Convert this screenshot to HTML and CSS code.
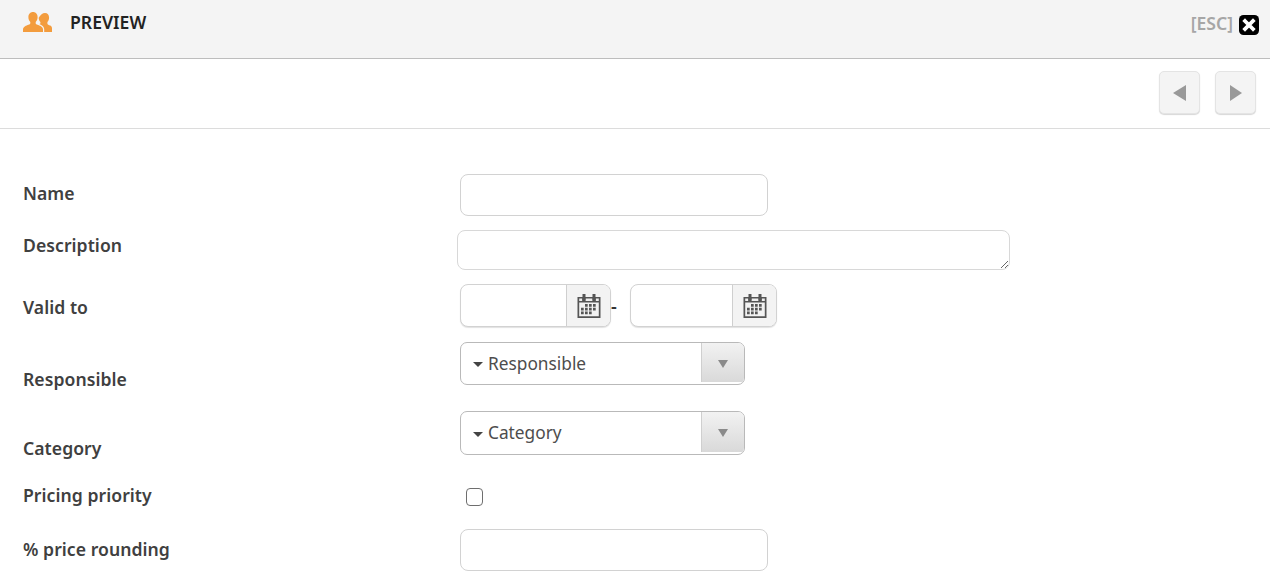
FILE: index.html
```html
<!DOCTYPE html>
<html lang="en">
<head>
<meta charset="utf-8">
<title>Preview</title>
<link rel="stylesheet" href="styles.css">
</head>
<body>
<header class="head">
  <div class="head-left">
    <svg class="users" width="30" height="21" viewBox="0 0 30 21"><path fill="#f39c3d" d="M10 1c2.800 0 4.600 2.200 4.600 5.200 0 2-.8 3.700-1.900 4.700v1.500c0 .9 3.200 1.600 5.200 2.800 1.400.8 2.100 1.800 2.100 3.300V21H0v-2.500c0-1.500.7-2.500 2.100-3.300 2-1.200 5.200-1.900 5.200-2.800v-1.500C6.200 9.900 5.400 8.200 5.400 6.200 5.400 3.200 7.200 1 10 1z"/><path fill="#f39c3d" d="M22 2c2.500 0 4.100 2 4.100 4.700 0 1.900-.8 3.500-1.700 4.400v1.600c0 .8 1.500 1.200 2.800 1.900 1.300.7 1.800 1.700 1.800 3V21h-7.800v-2.500c0-2-1-3.400-2.600-4.300-.9-.5-1.700-.9-2.300-1.200.6-.2.900-.4 1.100-.6v-1.300c-.9-.9-1.700-2.500-1.700-4.400C17.700 4 19.400 2 22 2z"/></svg>
    <span class="title">PREVIEW</span>
  </div>
  <div class="head-right">
    <span class="esc">[ESC]</span>
    <svg class="close" width="20" height="20" viewBox="0 0 20 20"><rect width="20" height="20" rx="4.500" fill="#000"/><path d="M6 6l8 8M14 6l-8 8" stroke="#fff" stroke-width="3.800" stroke-linecap="square" fill="none"/></svg>
  </div>
</header>
<nav class="toolbar">
  <button class="nav-btn" type="button"><span class="tri tri-left"></span></button>
  <button class="nav-btn" type="button"><span class="tri tri-right"></span></button>
</nav>
<form class="form">
  <div class="row row-name">
    <label class="lab">Name</label>
    <input class="inp" type="text">
  </div>
  <div class="row row-desc">
    <label class="lab">Description</label>
    <textarea class="area"></textarea>
  </div>
  <div class="row row-date">
    <label class="lab">Valid to</label>
    <div class="dates">
      <div class="date date-a">
        <span class="date-in"></span>
        <span class="cal"><svg width="24" height="25" viewBox="0 0 24 25"><use href="#calendar"/></svg></span>
      </div>
      <span class="dash">-</span>
      <div class="date date-b">
        <span class="date-in"></span>
        <span class="cal"><svg width="24" height="25" viewBox="0 0 24 25"><use href="#calendar"/></svg></span>
      </div>
    </div>
  </div>
  <div class="row row-sel row-resp">
    <label class="lab">Responsible</label>
    <div class="sel">
      <span class="sel-text"><span class="caret"></span>Responsible</span>
      <span class="sel-btn"><span class="caret-btn"></span></span>
    </div>
  </div>
  <div class="row row-sel row-cat">
    <label class="lab">Category</label>
    <div class="sel">
      <span class="sel-text"><span class="caret"></span>Category</span>
      <span class="sel-btn"><span class="caret-btn"></span></span>
    </div>
  </div>
  <div class="row row-check">
    <label class="lab">Pricing priority</label>
    <span class="check"></span>
  </div>
  <div class="row row-round">
    <label class="lab">% price rounding</label>
    <input class="inp" type="text">
  </div>
</form>
<svg class="defs" width="0" height="0">
  <symbol id="calendar" viewBox="0 0 24 25">
    <path fill="#555" d="M.5 4h23v21H.5z"/>
    <path fill="#f2f2f2" d="M2.200 9.500h19.600v13.800H2.200z"/>
    <path fill="#eee" d="M2.200 5.500h3v2.500h-3zM8.500 5.500h7v2.500h-7zM18.800 5.500h3v2.500h-3z"/>
    <path fill="#555" d="M5.500 1h3v6.500h-3zM15.500 1h3v6.500h-3z"/>
    <path fill="#555" d="M8 11h2.700v2.700H8zM12 11h2.700v2.700H12zM16 11h2.700v2.700H16zM4 14.700h2.700v2.700H4zM8 14.700h2.700v2.700H8zM12 14.700h2.700v2.700H12zM16 14.700h2.700v2.700H16zM4 18.500h2.700v2.700H4zM8 18.500h2.700v2.700H8zM12 18.500h2.700v2.700H12z"/>
  </symbol>
</svg>
</body>
</html>
```
FILE: styles.css
```css
* { box-sizing: border-box; }
html, body { margin: 0; padding: 0; }
body {
  font-family: "Noto Sans", "Open Sans", sans-serif;
  background: #fff;
  color: #333;
  height: 577px;
  overflow: hidden;
}
.head {
  height: 59px;
  background: #f4f4f4;
  border-bottom: 1px solid #bdbdbd;
  display: flex;
  justify-content: space-between;
  padding: 0 11px 0 23px;
}
.head-left { display: flex; align-items: flex-start; padding-top: 11px; }
.users { display: block; }
.title {
  margin-left: 17px;
  margin-top: -1px;
  font-size: 17.600px;
  font-weight: 600;
  line-height: 24px;
  color: #222;
}
.head-right { display: flex; align-items: flex-start; padding-top: 15px; }
.esc { margin-top: -1px; font-size: 17.600px; font-weight: 600; line-height: 19px; color: #a6a6a6; margin-right: 6px; }
.close { display: block; }
.toolbar {
  height: 70px;
  border-bottom: 1px solid #dcdcdc;
  display: flex;
  justify-content: flex-end;
  gap: 15px;
  padding: 12px 14px 0 0;
}
.nav-btn {
  width: 41px;
  height: 43px;
  padding: 0;
  background: #f4f4f4;
  border: 1px solid #e4e4e4;
  border-radius: 5px;
  box-shadow: 0 1px 1px #d8d8d8;
  display: flex;
  align-items: center;
  justify-content: center;
}
.tri { display: block; width: 0; height: 0; border-top: 8px solid transparent; border-bottom: 8px solid transparent; }
.tri-left { border-right: 13px solid #999; }
.tri-right { border-left: 12px solid #999; }
.form { padding: 45px 0 0 23px; }
.row { display: flex; }
.lab {
  width: 437px;
  flex: none;
  font-size: 17.600px;
  font-weight: 600;
  line-height: 24px;
  letter-spacing: 0.05px;
  color: #404040;
}
.inp {
  width: 308px;
  height: 42px;
  border: 1px solid #d2d2d2;
  border-radius: 8px;
  background: #fff;
  display: block;
}
.row-name { height: 56px; align-items: flex-start; }
.row-name .lab { margin-top: 7px; }
.row-desc { height: 54px; }
.row-desc .lab { margin-top: 3px; }
.area {
  display: block;
  margin-left: -3px;
  width: 553px;
  height: 40px;
  border: 1px solid #d8d8d8;
  border-radius: 8px;
  background: #fff;
  resize: both;
}
.row-date { height: 58px; }
.row-date .lab { margin-top: 11px; }
.dates { display: flex; align-items: flex-start; }
.date {
  height: 43px;
  display: flex;
  border: 1px solid #d2d2d2;
  border-radius: 8px;
  box-shadow: 0 1px 1px #e2e2e2;
  overflow: hidden;
  background: #fff;
}
.date-a { width: 151px; }
.date-b { width: 147px; }
.date-in { flex: 1; }
.cal {
  width: 44px;
  flex: none;
  background: #f3f3f3;
  border-left: 1px solid #cfcfcf;
  display: flex;
  align-items: center;
  justify-content: center;
}
.cal svg { display: block; }
.dash { width: 19px; font-size: 18px; line-height: 44px; font-weight: 600; color: #333; }
.row-resp { height: 69px; }
.row-cat { height: 71px; }
.row-sel .lab { margin-top: 25px; }
.sel {
  width: 285px;
  height: 43px;
  display: flex;
  justify-content: space-between;
  border: 1px solid #b9b9b9;
  border-radius: 7px;
  overflow: hidden;
  background: #fff;
}
.row-cat .sel { height: 44px; }
.sel-text {
  display: flex;
  align-items: center;
  padding-left: 12px;
  padding-bottom: 1px;
  font-size: 17.300px;
  color: #4d4d4d;
}
.caret {
  width: 0;
  height: 0;
  margin-right: 5px;
  margin-top: 3px;
  border-left: 5.500px solid transparent;
  border-right: 5.500px solid transparent;
  border-top: 5.500px solid #444;
}
.sel-btn {
  width: 43px;
  margin-bottom: 2px;
  padding-top: 2px;
  background: linear-gradient(#f2f2f2, #d9d9d9);
  border-left: 1px solid #cfcfcf;
  display: flex;
  align-items: center;
  justify-content: center;
}
.caret-btn {
  width: 0;
  height: 0;
  border-left: 5px solid transparent;
  border-right: 5px solid transparent;
  border-top: 8px solid #8a8a8a;
}
.row-check { height: 47px; }
.row-check .lab { margin-top: 1px; }
.check {
  display: block;
  width: 17px;
  height: 18px;
  margin: 6px 0 0 6px;
  border: 1.500px solid #6e6e6e;
  border-radius: 4px;
  background: #fff;
}
.row-round .lab { margin-top: 8px; }
.defs { position: absolute; }
```
